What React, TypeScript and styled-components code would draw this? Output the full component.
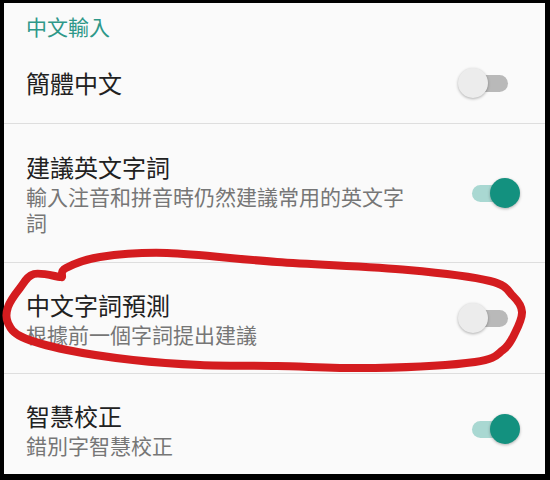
import React, { FC } from 'react'
import styled, { createGlobalStyle } from 'styled-components'

type Item = {
	title: string
	subtitle?: string
	on: boolean
	pt: number
	pb: number
}

const items: Item[] = [
	{ title: '簡體中文', on: false, pt: 24, pb: 24 },
	{
		title: '建議英文字詞',
		subtitle: '輸入注音和拼音時仍然建議常用的英文字詞',
		on: true,
		pt: 27,
		pb: 27
	},
	{
		title: '中文字詞預測',
		subtitle: '根據前一個字詞提出建議',
		on: false,
		pt: 26,
		pb: 26
	},
	{ title: '智慧校正', subtitle: '錯別字智慧校正', on: true, pt: 26, pb: 26 }
]

// hand drawn circle, traced from the screenshot
const scribble: [number, number][] = [
	[62, 277],
	[66, 268],
	[100, 257],
	[167, 253],
	[277, 262],
	[408, 270],
	[490, 281],
	[513, 296],
	[522, 312],
	[515, 333],
	[503, 350],
	[475, 362],
	[375, 368],
	[277, 366],
	[200, 365],
	[133, 360],
	[67, 350],
	[22, 337],
	[8, 323],
	[8, 307],
	[20, 288],
	[34, 274],
	[60, 277]
]

const smoothPath = (pts: [number, number][]) => {
	let d = `M ${pts[0][0]} ${pts[0][1]}`
	for (let i = 0; i < pts.length - 1; i++) {
		const p0 = pts[i - 1] || pts[i]
		const p1 = pts[i]
		const p2 = pts[i + 1]
		const p3 = pts[i + 2] || p2
		const c1x = p1[0] + (p2[0] - p0[0]) / 6
		const c1y = p1[1] + (p2[1] - p0[1]) / 6
		const c2x = p2[0] - (p3[0] - p1[0]) / 6
		const c2y = p2[1] - (p3[1] - p1[1]) / 6
		d += ` C ${c1x} ${c1y} ${c2x} ${c2y} ${p2[0]} ${p2[1]}`
	}
	return d
}

const App: FC = () => {
	return (
		<Frame>
			<GlobalStyle />
			<Screen>
				<Header>中文輸入</Header>
				{items.map((item, i) => (
					<Row key={item.title} $pt={item.pt} $pb={item.pb} $last={i === items.length - 1}>
						<TextBox>
							<Title>{item.title}</Title>
							{item.subtitle && <Subtitle>{item.subtitle}</Subtitle>}
						</TextBox>
						<Switch>
							<Track $on={item.on} />
							<Knob $on={item.on} />
						</Switch>
					</Row>
				))}
			</Screen>
			<Mark viewBox="0 0 550 480">
				<path
					d={smoothPath(scribble)}
					fill="none"
					stroke="#d41c1f"
					strokeWidth={8}
					strokeLinecap="round"
					strokeLinejoin="round"
				/>
			</Mark>
		</Frame>
	)
}

export default App

const GlobalStyle = createGlobalStyle`
	body {
		margin: 0;
		background: #000;
		font-family: "Noto Sans CJK TC", "Noto Sans", sans-serif;
	}
`

const Frame = styled.div`
	position: relative;
	width: 550px;
	height: 480px;
	box-sizing: border-box;
	padding: 3px 5px 6px 4px;
	background: #000;
`

const Screen = styled.main`
	height: 100%;
	background: #fafafa;
	overflow: hidden;
`

const Header = styled.div`
	padding: 9px 22px 3px;
	font-size: 21px;
	line-height: 28px;
	color: #2e9889;
`

const Row = styled.section<{ $pt: number; $pb: number; $last: boolean }>`
	display: flex;
	align-items: center;
	justify-content: space-between;
	padding: ${({ $pt }) => $pt}px 25px ${({ $pb }) => $pb}px 22px;
	border-bottom: ${({ $last }) => ($last ? 'none' : '1px solid #dedede')};
`

const TextBox = styled.div`
	width: 390px;
	display: flex;
	flex-direction: column;
`

const Title = styled.div`
	font-size: 24px;
	line-height: 32px;
	color: #212121;
`

const Subtitle = styled.div`
	font-size: 21px;
	line-height: 26px;
	color: #767676;
`

const Switch = styled.div`
	position: relative;
	flex-shrink: 0;
	width: 62px;
	height: 30px;
`

const Track = styled.div<{ $on: boolean }>`
	position: absolute;
	left: 14px;
	top: 7px;
	width: 36px;
	height: 17px;
	border-radius: 9px;
	background: ${({ $on }) => ($on ? '#a9d8d2' : '#b9b9b9')};
`

const Knob = styled.div<{ $on: boolean }>`
	position: absolute;
	top: 0;
	left: ${({ $on }) => ($on ? 32 : 0)}px;
	width: 30px;
	height: 30px;
	border-radius: 50%;
	background: ${({ $on }) => ($on ? '#13917f' : '#ececec')};
	box-shadow: 0 1px 3px rgba(0, 0, 0, 0.3);
`

const Mark = styled.svg`
	position: absolute;
	left: 0;
	top: 0;
	width: 550px;
	height: 480px;
	pointer-events: none;
`
